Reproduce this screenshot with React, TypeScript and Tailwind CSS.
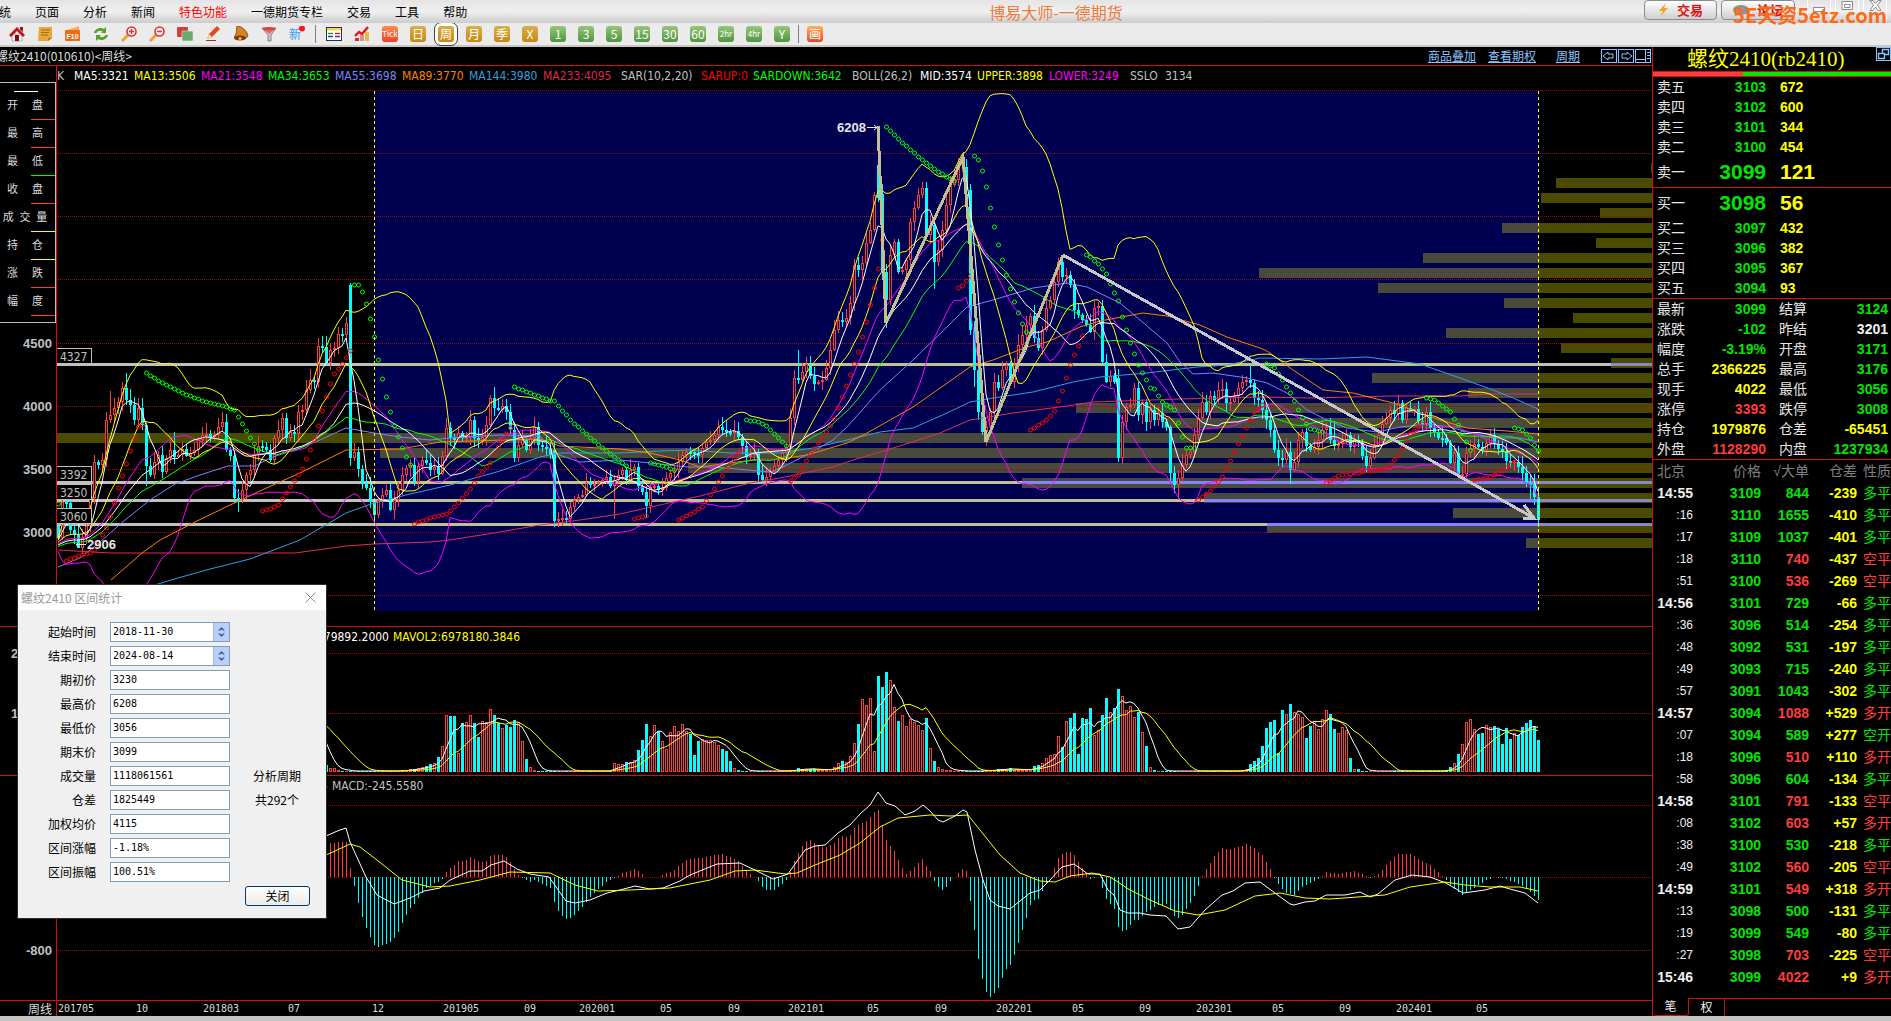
import type { ReactNode } from "react";

const FIRST_X = 58;
const STEP = 4;
const RANGE_START = 374;
const RANGE_END = 1538;

// weekly closes, already on the chart's vertical scale (63 units = 500 yuan)
const CLOSES = [
  538, 502, 503, 530, 535, 548, 538, 526, 498,
  462, 465, 460, 420, 415, 408, 402, 388, 400,
  405, 420, 408, 425, 466, 475, 462, 455, 472, 458,
  450, 457, 455, 449, 456, 453, 450, 440, 435, 434,
  437, 435, 427, 422, 450, 456, 498, 500, 490, 475,
  470, 455, 446, 447, 450, 460, 438, 430, 418, 438,
  432, 434, 412, 410, 390, 380, 382, 346, 347, 363,
  350, 348, 334, 335, 323, 458, 452, 469, 483, 488,
  502, 515, 500, 495, 490, 510, 500, 490, 475, 468,
  465, 482, 466, 460, 463, 470, 467, 474, 456, 428,
  438, 438, 433, 438, 437, 420, 438, 440, 437, 425,
  398, 408, 410, 406, 412, 430, 458, 445, 440, 450,
  438, 427, 445, 447, 449, 455, 521, 519, 518, 519,
  507, 500, 497, 495, 483, 485, 484, 482, 480, 477,
  486, 480, 475, 470, 480, 470, 467, 486, 492, 506,
  487, 486, 490, 488, 478, 473, 470, 462, 455, 452,
  452, 454, 455, 448, 442, 440, 435, 427, 430, 432,
  433, 431, 437, 446, 457, 455, 452, 475, 480, 477,
  472, 466, 460, 453, 447, 418, 378, 380, 372, 364,
  376, 384, 382, 380, 368, 350, 330, 320, 322, 318,
  303, 265, 270, 263, 243, 230, 195, 198, 272, 300,
  255, 242, 272, 270, 260, 222, 208, 195, 188, 235,
  225, 262, 250, 230, 205, 185, 180, 165, 158, 190,
  330, 370, 412, 432, 427, 412, 382, 388, 370, 365,
  382, 365, 345, 335, 325, 316, 338, 348, 330, 308,
  300, 282, 262, 277, 275, 285, 310, 315, 320, 325,
  332, 308, 306, 362, 382, 376, 382, 458, 422, 407,
  405, 388, 415, 402, 422, 410, 420, 413, 422, 427,
  473, 485, 478, 465, 455, 452, 435, 418, 402, 412,
  396, 400, 390, 389, 403, 402, 396, 388, 382, 380,
  383, 398, 400, 410, 420, 430, 450, 458, 460, 452,
  470, 462, 440, 432, 446, 450, 447, 440, 430, 427,
  440, 446, 444, 440, 435, 447, 440, 443, 456, 466,
  458, 446, 435, 424, 418, 410, 414, 403, 420, 408,
  410, 409, 421, 424, 412, 428, 432, 438, 438, 443,
  463, 453, 475, 474, 453, 449, 444, 447, 450, 443,
  435, 444, 449, 452, 461, 463, 462, 467, 473, 483,
  484, 497, 520,
];

const OPENS: Record<number, number> = { 350: 285, 878: 165, 882: 194, 966: 167, 1118: 378, 354: 458, 554: 450 };
const HIGHS: Record<number, number> = {
  126: 373, 110: 391, 878: 126, 966: 159, 1250: 364, 494: 387, 798: 350, 690: 447, 1286: 438, 322: 336, 174: 432, 1334: 421, 1494: 428,
};
const LOWS: Record<number, number> = {
  146: 486, 374: 523, 614: 519, 646: 518, 886: 328, 934: 289, 1290: 484, 1178: 500, 1530: 499, 78: 545, 238: 512, 986: 446, 974: 387,
};

type Point = [number, number];

const MA55: Point[] = [
  [58, 567], [80, 558], [100, 542], [125, 520], [150, 500], [175, 484], [200, 475], [228, 466], [255, 466], [270, 458],
  [300, 448], [320, 440], [346, 428], [374, 433], [400, 437], [430, 440], [450, 438], [500, 435], [540, 436], [553, 453],
  [580, 462], [620, 460], [650, 463], [687, 467], [713, 467], [737, 469], [770, 472], [783, 467], [810, 453], [833, 440],
  [847, 427], [880, 390], [913, 360], [947, 327], [967, 307], [993, 300], [1033, 288], [1067, 283], [1087, 287],
  [1120, 303], [1140, 320], [1167, 343], [1180, 362], [1193, 374], [1213, 373], [1247, 378], [1267, 383], [1287, 393],
  [1307, 410], [1327, 420], [1347, 428], [1377, 432], [1400, 427], [1427, 424], [1450, 427], [1467, 432], [1493, 438],
  [1520, 438], [1538, 442],
];
const MA89: Point[] = [
  [111, 580], [142, 553], [160, 540], [195, 522], [228, 506], [262, 490], [300, 473], [346, 450], [400, 449], [440, 442],
  [470, 441], [540, 439], [560, 446], [620, 449], [650, 453], [680, 460], [700, 467], [730, 463], [760, 459], [780, 459],
  [807, 455], [847, 443], [867, 433], [890, 420], [913, 407], [933, 393], [970, 367], [993, 360], [1027, 347],
  [1047, 342], [1080, 327], [1100, 321], [1143, 313], [1167, 316], [1200, 325], [1227, 337], [1260, 348], [1267, 351],
  [1293, 370], [1323, 390], [1353, 393], [1393, 403], [1413, 410], [1440, 420], [1467, 428], [1507, 431], [1538, 434],
];
const MA144: Point[] = [
  [155, 585], [171, 580], [210, 569], [250, 559], [300, 540], [346, 513], [374, 503], [410, 494], [450, 485], [500, 471],
  [540, 457], [560, 453], [620, 453], [660, 451], [690, 450], [730, 453], [760, 453], [780, 453], [813, 448], [847, 440],
  [880, 432], [913, 428], [947, 413], [970, 402], [993, 398], [1033, 392], [1073, 382], [1100, 377], [1147, 373],
  [1197, 367], [1227, 365], [1260, 358], [1320, 359], [1367, 357], [1420, 364], [1460, 378], [1493, 390], [1513, 398],
  [1538, 409],
];
const MA233: Point[] = [
  [58, 550], [110, 553], [180, 553], [295, 553], [346, 546], [374, 544], [430, 542], [450, 540], [500, 532], [540, 525],
  [580, 520], [620, 514], [660, 505], [700, 496], [750, 483], [780, 478], [833, 467], [853, 460], [887, 450], [940, 433],
  [970, 420], [1013, 413], [1067, 406], [1093, 402], [1180, 399], [1260, 397], [1310, 398], [1393, 396], [1460, 396],
  [1487, 394], [1538, 394],
];

const SAR_DOWN: Point[][] = [
  [[58, 504], [58, 504]],
  [[146, 373], [162, 383], [182, 393], [202, 401], [222, 406], [234, 410], [242, 424], [250, 438], [258, 450]],
  [[354, 285], [358, 285], [362, 292], [366, 304], [370, 319], [374, 337], [378, 360], [386, 397], [394, 426], [402, 448], [410, 465]],
  [[514, 387], [530, 393], [550, 401], [554, 401], [570, 420], [590, 438], [606, 451], [626, 466]],
  [[650, 463], [662, 466], [674, 470]],
  [[746, 420], [758, 422], [766, 426], [786, 446]],
  [[886, 127], [898, 139], [910, 150], [922, 160], [934, 169], [946, 177], [954, 181]],
  [[974, 156], [978, 160], [982, 171], [986, 187], [990, 208], [998, 245], [1006, 275], [1014, 302], [1022, 324], [1026, 332]],
  [[1086, 255], [1090, 257], [1098, 264], [1106, 274], [1110, 284], [1118, 301], [1122, 317], [1130, 343], [1138, 365], [1150, 388], [1154, 389], [1162, 402], [1174, 410], [1178, 423], [1182, 437], [1186, 448], [1194, 448]],
  [[1266, 364], [1274, 368], [1282, 380], [1290, 393], [1302, 418], [1310, 429], [1322, 432]],
  [[1426, 398], [1434, 400], [1442, 406], [1450, 412], [1458, 425], [1470, 450]],
  [[1514, 428], [1522, 430], [1530, 438], [1538, 451]],
];
const SAR_UP: Point[][] = [
  [[66, 561], [78, 556], [90, 553], [94, 550], [102, 535], [106, 528], [110, 517], [114, 503], [118, 488], [126, 464], [134, 438], [138, 427], [142, 425]],
  [[262, 511], [270, 509], [278, 505], [290, 487], [302, 469], [314, 440], [322, 411], [326, 397], [330, 384], [334, 374], [342, 364], [350, 351]],
  [[414, 524], [418, 522], [434, 517], [446, 514], [454, 507], [470, 489], [478, 476], [490, 463], [498, 447], [510, 428]],
  [[634, 519], [646, 516]],
  [[678, 520], [690, 514], [702, 507], [710, 495], [726, 469], [742, 449]],
  [[790, 481], [798, 475], [810, 454], [826, 432], [834, 419], [842, 397], [850, 375], [858, 352], [866, 322], [874, 288], [878, 269], [882, 240]],
  [[958, 288], [962, 286], [970, 276]],
  [[1030, 430], [1046, 420], [1054, 411], [1062, 391], [1070, 365], [1082, 336]],
  [[1198, 500], [1210, 491], [1222, 477], [1238, 444], [1254, 412], [1262, 405]],
  [[1326, 483], [1338, 476], [1350, 474], [1366, 471], [1382, 470], [1390, 465], [1398, 455], [1410, 434], [1422, 424]],
  [[1474, 480], [1490, 477], [1498, 473], [1506, 468], [1514, 462]],
];

// left edge of each volume-at-price bar, from the top down
const PROFILE = [
  1651, 1556, 1541, 1600, 1502, 1596, 1423, 1259, 1378, 1504, 1573, 1446, 1561, 1611, 1372, 1468, 1076, 1163, 57, 380,
  688, 1022, 1204, 1453, 1267, 1526,
];

const LEVELS = [
  { price: 4327, y: 363, overlap: 1611 },
  { price: 3392, y: 481, overlap: 1022 },
  { price: 3250, y: 499, overlap: 1204 },
  { price: 3060, y: 523, overlap: 1267 },
];

const VOLUME_BASE = 772;
const VOLUME_RUNS: [number, number[]][] = [
  [270, [735, 720, 715, 712, 718, 710, 716, 712, 715, 722, 720, 728, 740, 757, 765, 768, 768, 770]],
  [402, [770, 770, 769, 769, 768, 767, 766, 764, 763, 757, 746, 715, 716, 716, 753, 723, 722, 715, 723, 737, 721, 722, 709, 715, 723, 728, 725, 727, 720, 722, 741, 759, 767, 770]],
  [614, [763, 764, 764, 762, 762, 760, 750, 740, 724, 736, 725, 731, 741, 749, 732, 726, 731, 724, 731, 734, 755, 741, 739, 740, 740, 742, 745, 749, 751, 761, 768, 770]],
  [790, [770, 770, 768, 769, 769, 769, 769, 770, 770, 770, 769, 767, 763, 761, 762, 756, 743, 724, 699, 705, 698, 751, 676, 687, 672, 680, 707, 721, 715, 726, 719, 722, 725, 730, 718, 748, 761, 767, 769, 770, 770]],
  [986, [770, 770, 770, 769, 769, 769, 768, 770, 770, 770, 770, 769, 766, 765, 763, 758, 755, 754, 736, 747, 721, 718, 713, 754, 718, 719, 708, 735, 730, 715, 698, 712, 708, 689, 696, 710, 706, 717, 712, 732, 746, 767, 770]],
  [1242, [770, 769, 764, 761, 758, 746, 728, 722, 720, 753, 710, 714, 704, 712, 714, 717, 738, 726, 721, 729, 719, 710, 714, 729, 733, 727, 730, 758, 769, 769]],
  [1446, [770, 767, 763, 754, 744, 722, 719, 729, 734, 733, 725, 727, 726, 729, 744, 728, 739, 733, 735, 727, 723, 720, 727, 740]],
];

const HISTOGRAM: Point[] = [
  [262, 850], [326, 843], [346, 842], [350, 868], [354, 886], [358, 903], [362, 917], [366, 928], [370, 937], [374, 945], [378, 947],
  [382, 945], [390, 942], [394, 938], [398, 932], [402, 923], [406, 915], [410, 908], [414, 904], [418, 898], [426, 888],
  [434, 883], [438, 882], [442, 879], [446, 872], [450, 868], [454, 865], [458, 861], [466, 860], [470, 857], [474, 859],
  [482, 862], [486, 861], [490, 856], [494, 855], [502, 855], [506, 857], [510, 862], [518, 875], [522, 878], [530, 882],
  [534, 880], [542, 884], [550, 888], [554, 902], [558, 911], [562, 916], [566, 919], [570, 918], [574, 915], [582, 907],
  [590, 897], [598, 889], [606, 882], [614, 878], [622, 873], [630, 871], [634, 869], [638, 871], [646, 877], [658, 877],
  [666, 873], [674, 870], [678, 866], [686, 860], [694, 858], [702, 858], [710, 856], [722, 854], [730, 857], [738, 861],
  [746, 870], [754, 877], [758, 881], [762, 887], [766, 890], [774, 890], [782, 884], [786, 880], [790, 872], [794, 861],
  [798, 853], [802, 846], [806, 841], [810, 840], [818, 845], [822, 847], [826, 847], [834, 843], [838, 838], [842, 836],
  [846, 837], [850, 835], [854, 828], [858, 825], [866, 821], [874, 812], [878, 810], [882, 825], [886, 840], [894, 851],
  [902, 868], [906, 874], [914, 867], [922, 859], [926, 866], [930, 871], [934, 881], [938, 887], [942, 890], [946, 887],
  [950, 881], [958, 873], [962, 869], [966, 871], [970, 901], [974, 930], [978, 959], [982, 979], [986, 992], [990, 997],
  [994, 993], [998, 988], [1002, 978], [1006, 969], [1010, 965], [1014, 955], [1018, 943], [1022, 930], [1026, 918],
  [1030, 905], [1034, 900], [1038, 899], [1042, 891], [1046, 883], [1050, 877], [1054, 868], [1058, 858], [1062, 854],
  [1066, 852], [1070, 852], [1074, 855], [1078, 862], [1082, 868], [1086, 874], [1090, 879], [1098, 877], [1102, 888],
  [1106, 899], [1114, 909], [1118, 927], [1122, 931], [1126, 930], [1134, 920], [1138, 920], [1146, 912], [1158, 905],
  [1166, 904], [1174, 916], [1178, 918], [1182, 915], [1190, 903], [1194, 896], [1198, 886], [1202, 876], [1206, 869],
  [1214, 856], [1222, 848], [1230, 849], [1238, 847], [1246, 844], [1254, 848], [1262, 855], [1270, 869], [1274, 878],
  [1278, 884], [1286, 893], [1294, 895], [1302, 887], [1310, 883], [1318, 879], [1326, 872], [1338, 874], [1346, 872],
  [1354, 871], [1362, 874], [1370, 878], [1378, 874], [1386, 865], [1394, 857], [1398, 854], [1410, 854], [1422, 861],
  [1430, 865], [1438, 872], [1446, 880], [1454, 889], [1462, 895], [1470, 890], [1478, 885], [1486, 880], [1494, 877],
  [1506, 879], [1514, 882], [1522, 886], [1530, 892], [1538, 900],
];
const DIF: Point[] = [
  [300, 845], [326, 836], [335, 832], [340, 830], [346, 828], [350, 842], [366, 877], [377, 895], [394, 904], [410, 898], [424, 891],
  [440, 888], [450, 880], [470, 871], [482, 871], [491, 865], [504, 861], [517, 869], [530, 874], [549, 877], [566, 901],
  [575, 903], [590, 900], [607, 893], [620, 890], [635, 886], [650, 889], [663, 888], [680, 881], [690, 875], [717, 864],
  [740, 863], [757, 871], [773, 879], [788, 874], [805, 850], [815, 846], [825, 845], [838, 833], [850, 825], [860, 814],
  [870, 805], [878, 792], [886, 803], [895, 806], [905, 815], [915, 811], [923, 805], [930, 811], [938, 820], [943, 822],
  [955, 816], [963, 810], [967, 812], [975, 850], [983, 880], [990, 900], [998, 906], [1010, 909], [1020, 901],
  [1030, 893], [1040, 890], [1050, 880], [1062, 867], [1074, 864], [1088, 874], [1100, 874], [1108, 890], [1114, 895],
  [1120, 910], [1128, 913], [1140, 913], [1150, 915], [1166, 916], [1178, 929], [1190, 927], [1205, 910], [1222, 895],
  [1233, 891], [1245, 883], [1260, 882], [1275, 893], [1290, 904], [1294, 905], [1305, 902], [1315, 901], [1326, 895],
  [1345, 895], [1360, 892], [1370, 897], [1378, 894], [1395, 880], [1412, 875], [1430, 877], [1446, 883], [1463, 893],
  [1485, 890], [1500, 886], [1510, 889], [1525, 893], [1538, 903],
];
const DEA: Point[] = [
  [300, 865], [326, 855], [335, 851], [350, 844], [360, 847], [377, 860], [402, 880], [430, 887], [450, 886], [480, 880], [510, 872],
  [550, 873], [575, 885], [598, 891], [630, 890], [670, 888], [710, 880], [735, 871], [755, 870], [785, 874], [797, 873],
  [815, 865], [840, 855], [860, 843], [880, 827], [898, 818], [930, 815], [950, 816], [968, 815], [980, 830], [1000, 855],
  [1020, 873], [1040, 881], [1055, 882], [1070, 876], [1092, 873], [1110, 877], [1130, 890], [1150, 900], [1175, 911],
  [1198, 915], [1225, 910], [1255, 896], [1280, 893], [1305, 898], [1330, 899], [1385, 895], [1410, 887], [1445, 882],
  [1465, 885], [1490, 887], [1520, 887], [1538, 891],
];

const DATES: [number, string][] = [
  [58, "201705"], [136, "10"], [203, "201803"], [288, "07"], [372, "12"], [443, "201905"], [524, "09"], [579, "202001"],
  [660, "05"], [728, "09"], [788, "202101"], [867, "05"], [935, "09"], [996, "202201"], [1072, "05"], [1139, "09"],
  [1196, "202301"], [1272, "05"], [1339, "09"], [1396, "202401"], [1476, "05"],
];

const xAt = (i: number) => FIRST_X + i * STEP;
const noise = (i: number, seed: number) => {
  const v = Math.sin(i * 12.9898 + seed * 78.233) * 43758.5453;
  return v - Math.floor(v);
};
const toPoints = (pts: Point[]) => pts.map(([x, y]) => `${x},${y}`).join(" ");

function valueAt(points: Point[], x: number) {
  for (let i = 1; i < points.length; i++) {
    const [x1, y1] = points[i];
    if (x <= x1) {
      const [x0, y0] = points[i - 1];
      return x1 === x0 ? y1 : y0 + ((y1 - y0) * (x - x0)) / (x1 - x0);
    }
  }
  return points[points.length - 1][1];
}

function sample(points: Point[]): Point[] {
  const out: Point[] = [];
  for (let x = points[0][0]; x <= points[points.length - 1][0]; x += STEP) {
    out.push([x, Math.round(valueAt(points, x))]);
  }
  return out;
}

const HISTORY = Array.from({ length: 40 }, (_, i) => 556 - i * 0.4);
const SERIES = [...HISTORY, ...CLOSES];

function average(n: number): Point[] {
  return CLOSES.map((_, i) => {
    const part = SERIES.slice(i + HISTORY.length - n + 1, i + HISTORY.length + 1);
    return [xAt(i), part.reduce((a, b) => a + b, 0) / n];
  });
}

function band(n: number, k: number): Point[] {
  return average(n).map(([x, mean], i) => {
    const part = SERIES.slice(i + HISTORY.length - n + 1, i + HISTORY.length + 1);
    const variance = part.reduce((a, b) => a + (b - mean) ** 2, 0) / n;
    return [x, mean + k * Math.sqrt(variance)];
  });
}

const VOLUMES = CLOSES.map(() => 771);
VOLUME_RUNS.forEach(([x0, tops]) =>
  tops.forEach((top, k) => {
    VOLUMES[(x0 - FIRST_X) / STEP + k] = top;
  }),
);
const volumeAverage = (n: number): Point[] =>
  VOLUMES.map((_, i) => {
    const part = VOLUMES.slice(Math.max(0, i - n + 1), i + 1);
    return [xAt(i), part.reduce((a, b) => a + b, 0) / part.length];
  });

const openAt = (i: number) => OPENS[xAt(i)] ?? (i ? CLOSES[i - 1] : 526);
const isUp = (i: number) => CLOSES[i] < openAt(i);

function Line({ points, color }: { points: Point[]; color: string }) {
  return <polyline points={toPoints(points)} fill="none" stroke={color} strokeWidth={1} />;
}

function GridLine({ y }: { y: number }) {
  return <line x1={58} x2={1652} y1={y + 0.5} y2={y + 0.5} stroke="#b00000" strokeDasharray="1 1" />;
}

function Candles() {
  return (
    <g shapeRendering="crispEdges">
      {CLOSES.map((close, i) => {
        const x = xAt(i);
        const open = openAt(i);
        const up = isUp(i);
        const top = Math.min(open, close);
        const height = Math.max(2, Math.abs(open - close));
        const high = Math.min(top, HIGHS[x] ?? top - 2 - Math.round(noise(i, 1) * 9));
        const low = Math.max(top + height, LOWS[x] ?? top + height + 1 + Math.round(noise(i, 2) * 8));
        const color = up ? "#ff3c3c" : "#00ffff";
        return (
          <g key={x}>
            <rect x={x} y={high} width={1} height={low - high} fill={color} />
            <rect x={x - 1} y={top} width={3} height={height} fill={color} />
            {up && height > 2 && (
              <rect x={x} y={top + 1} width={1} height={height - 2} fill={x >= RANGE_START ? "#000050" : "#000000"} />
            )}
          </g>
        );
      })}
    </g>
  );
}

function PriceChart() {
  return (
    <svg className="block h-[560px] w-full" role="img" aria-label="螺纹2410 周线">
      <g transform="translate(0 -66)">
        <rect x={RANGE_START} y={91} width={RANGE_END - RANGE_START} height={520} fill="#000050" />
        {PROFILE.map((left, i) => (
          <g key={i}>
            <rect x={left} y={163 + i * 15} width={1652 - left} height={10} fill="#4a4a00" />
            {left < RANGE_END && (
              <rect
                x={Math.max(left, RANGE_START)}
                y={163 + i * 15}
                width={RANGE_END - Math.max(left, RANGE_START)}
                height={10}
                fill="#4a4a3c"
              />
            )}
          </g>
        ))}
        {[90, 153, 216, 279, 343, 406, 469, 532, 595].map((y) => (
          <GridLine key={y} y={y} />
        ))}
        {LEVELS.map(({ price, y, overlap }) => (
          <g key={price} shapeRendering="crispEdges">
            <rect x={56} y={y} width={1596} height={3} fill="#c0c0c0" />
            <rect x={RANGE_START} y={y} width={RANGE_END - RANGE_START} height={3} fill="#c0c090" />
            <rect x={overlap} y={y} width={1652 - overlap} height={3} fill="#8888c4" />
            {overlap < RANGE_END && <rect x={overlap} y={y} width={RANGE_END - overlap} height={3} fill="#8484ff" />}
          </g>
        ))}
        <Candles />
        <Line points={MA233} color="#e03050" />
        <Line points={MA144} color="#30a0dc" />
        <Line points={MA89} color="#ff8000" />
        <Line points={MA55} color="#8080ff" />
        <Line points={average(34)} color="#00ff00" />
        <Line points={average(21)} color="#ff00ff" />
        <Line points={average(26)} color="#ffffff" />
        <Line points={band(26, -2)} color="#ffff00" />
        <Line points={band(26, 2)} color="#ff00ff" />
        <Line points={average(13)} color="#ffff00" />
        <Line points={average(5)} color="#ffffff" />
        {SAR_DOWN.flatMap(sample).map(([x, y]) => (
          <circle key={x} cx={x + 0.5} cy={y} r={2} fill="none" stroke="#00ff00" />
        ))}
        {SAR_UP.flatMap(sample).map(([x, y]) => (
          <circle key={x} cx={x + 0.5} cy={y} r={2} fill="none" stroke="#ff0000" />
        ))}
        <g fill="none" strokeWidth={3} shapeRendering="crispEdges">
          <polyline points="878,126 886,323 963,157 986,442 1063,255" stroke="#c0c090" />
          <path d="M1063 255L1534 518M1524 505L1534 518L1523 518" stroke="#c8c8c8" />
        </g>
        {[RANGE_START, RANGE_END].map((x) => (
          <line key={x} x1={x + 0.5} x2={x + 0.5} y1={91} y2={611} stroke="#ffff00" strokeDasharray="3 3" />
        ))}
        {LEVELS.map(({ price, y }) => (
          <g key={price}>
            <rect x={56.5} y={y - 14.5} width={35} height={15} fill="#000000" stroke="#c0c0c0" />
            <text x={60} y={y - 2} fill="#c0c0c0" className="font-['DejaVu_Sans_Condensed','Noto_Sans',sans-serif] text-[12px]">
              {price}
            </text>
          </g>
        ))}
        <g className="font-['Liberation_Sans',sans-serif] text-[13px] font-bold" fill="#c0c0c0">
          {[4500, 4000, 3500, 3000].map((price, i) => (
            <text key={price} x={52} y={348 + i * 63} textAnchor="end">
              {price}
            </text>
          ))}
          <text x={837} y={132} fill="#e6e6e6">6208</text>
          <text x={87} y={549} fill="#e6e6e6">2906</text>
        </g>
        <path d="M867 127.500H877M874 125L877 127.500L874 130M86 544.500H76M79 542L76 544.500L79 547" fill="none" stroke="#e6e6e6" />
        <line x1={56.5} x2={56.5} y1={66} y2={626} stroke="#c81414" />
      </g>
    </svg>
  );
}

function VolumeChart() {
  return (
    <svg className="block h-[148px] w-full" role="img" aria-label="成交量">
      <g transform="translate(0 -627)">
        <GridLine y={653} />
        <GridLine y={713} />
        <g shapeRendering="crispEdges">
          {VOLUMES.map((top, i) => {
            const x = xAt(i) - 1;
            const up = isUp(i);
            return (
              <g key={x}>
                <rect x={x} y={top} width={3} height={VOLUME_BASE - top} fill={up ? "#ff3c3c" : "#00ffff"} />
                {up && top < 770 && <rect x={x + 1} y={top + 1} width={1} height={VOLUME_BASE - top - 2} fill="#000000" />}
              </g>
            );
          })}
        </g>
        <Line points={volumeAverage(5)} color="#ffffff" />
        <Line points={volumeAverage(13)} color="#ffff00" />
        <g className="font-['Liberation_Sans',sans-serif] text-[13px] font-bold" fill="#c0c0c0">
          <text x={11} y={658}>200000</text>
          <text x={11} y={718}>100000</text>
        </g>
        <line x1={56.5} x2={56.5} y1={627} y2={775} stroke="#c81414" />
      </g>
    </svg>
  );
}

function MacdChart() {
  const bars = sample(HISTOGRAM);
  return (
    <svg className="block h-[224px] w-full" role="img" aria-label="MACD">
      <g transform="translate(0 -776)">
        <GridLine y={805} />
        <GridLine y={877} />
        <GridLine y={950} />
        <g shapeRendering="crispEdges">
          {bars.map(([x, y]) => (
            <rect
              key={x}
              x={x}
              y={Math.min(y, 877)}
              width={1}
              height={Math.abs(y - 877)}
              fill={y < 877 ? "#ff3c3c" : "#00ffff"}
            />
          ))}
        </g>
        <Line points={DIF} color="#ffffff" />
        <Line points={DEA} color="#ffff00" />
        <text x={52} y={955} textAnchor="end" fill="#c0c0c0" className="font-['Liberation_Sans',sans-serif] text-[13px] font-bold">
          -800
        </text>
        <line x1={56.5} x2={56.5} y1={776} y2={1000} stroke="#c81414" />
      </g>
    </svg>
  );
}

const MENU = ["系统", "页面", "分析", "新闻", "特色功能", "一德期货专栏", "交易", "工具", "帮助"];

function MenuBar() {
  return (
    <header className="relative flex h-[23px] items-center overflow-hidden bg-linear-to-b from-[#e4e4e4] via-[#f0f0f0] to-[#cccccc]">
      <nav className="-ml-[13px] flex w-[53%] shrink-0 gap-6 text-[12px] text-black">
        {MENU.map((item) => (
          <button key={item} type="button" className={item === "特色功能" ? "text-[#ff0000]" : ""}>
            {item}
          </button>
        ))}
      </nav>
      <h1 className="text-[16px] leading-5 whitespace-nowrap text-[#ee7a3c]">博易大师-一德期货</h1>
      <div className="flex flex-1 items-start justify-end gap-1 self-start text-[13px] font-bold text-[#dc1414]">
        <button type="button" className="flex h-5 w-[73px] items-center justify-center gap-2 rounded-[4px] border border-[#8c8c8c] bg-linear-to-b from-white to-[#cfcfcf]">
          <svg width="11" height="14" viewBox="0 0 11 14">
            <path d="M8 0L1 8H5L2 14L10 5H6Z" fill="#f5a01e" />
          </svg>
          <span>交易</span>
        </button>
        <button type="button" className="flex h-5 w-[74px] items-center justify-center gap-2 rounded-[4px] border border-[#8c8c8c] bg-linear-to-b from-white to-[#cfcfcf]">
          <svg width="16" height="12" viewBox="0 0 16 12">
            <ellipse cx="8" cy="6" rx="8" ry="5" fill="#909090" />
          </svg>
          <span>论坛</span>
        </button>
        <div className="ml-2 flex h-5 items-start">
          <WindowButton label="最小化">
            <rect x="5.500" y="7.500" width="11" height="4" />
          </WindowButton>
          <WindowButton label="最大化">
            <path d="M6 1.500H16.500V9.500H6ZM8.500 4.500H14V7.500H8.500Z" />
          </WindowButton>
          <WindowButton label="关闭窗口">
            <path d="M6 0.500H9L11.500 3.500L14 0.500H17L13.500 5L17 10.500H14L11.500 7L9 10.500H6L9.500 5Z" />
          </WindowButton>
        </div>
      </div>
    </header>
  );
}

function WindowButton({ label, children }: { label: string; children: ReactNode }) {
  return (
    <button type="button" aria-label={label} className="mr-1 h-5 w-6 border-x border-white">
      <svg width="22" height="20" viewBox="0 0 22 20" fill="#ffffff" stroke="#8c8c8c">
        {children}
      </svg>
    </button>
  );
}

const TOOL_ICONS: { label: string; art: ReactNode }[] = [
  {
    label: "首页",
    art: (
      <>
        <path d="M3 8H13V15H3Z" fill="#f2f2f2" stroke="#888" strokeWidth=".6" />
        <path d="M0 9L8 1L16 9L14 11L8 5L2 11Z" fill="#c01818" />
        <path d="M11 1H14V6L11 3.500Z" fill="#a01414" />
        <rect x="6" y="9" width="4" height="6" fill="#7a1010" />
      </>
    ),
  },
  {
    label: "便笺",
    art: (
      <>
        <path d="M2 1H15V12L11 15H1Z" fill="#e8a83c" />
        <path d="M15 12H11V15Z" fill="#b87818" />
        <path d="M4 4H13M4 6.500H12M4 9H11" stroke="#a86c14" />
      </>
    ),
  },
  {
    label: "F10",
    art: (
      <>
        <path d="M2 4L14 0L15 14L2 15Z" fill="#f4b060" />
        <rect x="0" y="4" width="15" height="11" rx="1" fill="#ee6a14" />
        <text x="1.500" y="12.500" fill="#fff" className="font-['Liberation_Sans',sans-serif] text-[7px] font-bold">F10</text>
      </>
    ),
  },
  {
    label: "刷新",
    art: (
      <path
        d="M1 7C2 2 8 1 11 3L13 1V7H8L9.500 5.500C7 4 4.500 5 3.500 7ZM15 9C14 14 8 15 5 13L3 15V9H8L6.500 10.500C9 12 11.500 11 12.500 9Z"
        fill="#58a028"
      />
    ),
  },
  {
    label: "放大",
    art: (
      <>
        <path d="M1 15L7 9" stroke="#f0a030" strokeWidth="3" />
        <circle cx="10.500" cy="5.500" r="4.500" fill="#fff0f0" stroke="#e03030" strokeWidth="1.600" />
        <path d="M8 5.500H13M10.500 3V8" stroke="#e03030" strokeWidth="1.400" />
      </>
    ),
  },
  {
    label: "缩小",
    art: (
      <>
        <path d="M1 15L7 9" stroke="#f0a030" strokeWidth="3" />
        <circle cx="10.500" cy="5.500" r="4.500" fill="#fff0f0" stroke="#e03030" strokeWidth="1.600" />
        <path d="M8 5.500H13" stroke="#e03030" strokeWidth="1.400" />
      </>
    ),
  },
  {
    label: "叠加",
    art: (
      <>
        <rect x="0" y="1" width="11" height="10" rx="1" fill="#d43c3c" />
        <rect x="5" y="5" width="11" height="10" rx="1" fill="#6ca86c" stroke="#dcecdc" strokeWidth=".6" />
      </>
    ),
  },
  {
    label: "画笔",
    art: (
      <>
        <path d="M1 14.500H11" stroke="#a03020" />
        <path d="M2 13L4 8L12 0L15 3L7 11Z" fill="#e04a20" />
        <path d="M2 13L4 8L7 11Z" fill="#f8d8a0" />
      </>
    ),
  },
  {
    label: "预警",
    art: (
      <>
        <path d="M4 0C8 0 14 4 15 10L13 12C9 14 4 13 1 11C4 9 3 4 4 0Z" fill="#d48420" stroke="#7a4410" strokeWidth=".8" />
        <ellipse cx="7" cy="12" rx="6" ry="2.500" fill="#7a3c10" />
        <circle cx="7" cy="12.500" r="1.500" fill="#f0c040" />
      </>
    ),
  },
  {
    label: "筛选",
    art: (
      <>
        <path d="M1 2H15L10 9V15H7V9Z" fill="#c8c8c8" stroke="#707070" strokeWidth=".8" />
        <ellipse cx="8" cy="3" rx="6.500" ry="2" fill="#e04040" />
        <path d="M4 4H12L8.500 8Z" fill="#e86060" />
      </>
    ),
  },
  {
    label: "新功能",
    art: (
      <>
        <text x="0" y="13" fill="#3c96f0" className="font-['Noto_Sans_CJK_SC',sans-serif] text-[12px]">新</text>
        <circle cx="13" cy="2.500" r="3" fill="#ff1414" />
      </>
    ),
  },
];

const CHART_ICONS: { label: string; art: ReactNode }[] = [
  {
    label: "报价",
    art: (
      <>
        <rect x=".5" y="1.500" width="15" height="13" fill="#fff" stroke="#303030" />
        <rect x="1" y="2" width="14" height="2.500" fill="#f0dc50" />
        <path d="M2 7.500H7" stroke="#20a020" strokeWidth="1.400" />
        <path d="M9 7.500H14" stroke="#d02020" strokeWidth="1.400" />
        <path d="M2 10.500H7M9 10.500H14" stroke="#2040d0" strokeWidth="1.400" />
      </>
    ),
  },
  {
    label: "走势",
    art: (
      <>
        <rect x="1" y="12" width="4" height="3" fill="#c83030" />
        <rect x="6" y="9" width="4" height="6" fill="#d89090" />
        <rect x="11" y="6" width="4" height="9" fill="#e8b848" />
        <path d="M1 10L5 6L8 8L14 1" stroke="#e01414" strokeWidth="2.400" fill="none" />
      </>
    ),
  },
];

const PERIODS = [
  { label: "Tick", tone: "tick" },
  { label: "日", tone: "gold" },
  { label: "周", tone: "gold" },
  { label: "月", tone: "gold" },
  { label: "季", tone: "gold" },
  { label: "X", tone: "gold" },
  { label: "1", tone: "green" },
  { label: "3", tone: "green" },
  { label: "5", tone: "green" },
  { label: "15", tone: "green" },
  { label: "30", tone: "green" },
  { label: "60", tone: "green" },
  { label: "2hr", tone: "green" },
  { label: "4hr", tone: "green" },
  { label: "Y", tone: "green" },
];

const TONES: Record<string, string> = {
  tick: "bg-linear-to-b from-[#ff8c50] to-[#f03c28]",
  gold: "bg-linear-to-b from-[#d8b048] to-[#c88808]",
  green: "bg-linear-to-b from-[#94c878] to-[#4f9440]",
};

function Toolbar() {
  return (
    <div className="flex h-6 items-center gap-3 border-b-2 border-[#cbc7c3] bg-[#ebebeb] pl-[9px]">
      {TOOL_ICONS.map(({ label, art }) => (
        <button key={label} type="button" aria-label={label} className="size-4 shrink-0">
          <svg width="16" height="16" viewBox="0 0 16 16" fill="none">{art}</svg>
        </button>
      ))}
      <span className="-mx-[2px] h-[18px] w-px bg-[#808080]" />
      {CHART_ICONS.map(({ label, art }) => (
        <button key={label} type="button" aria-label={label} className="size-4 shrink-0">
          <svg width="16" height="16" viewBox="0 0 16 16" fill="none">{art}</svg>
        </button>
      ))}
      {PERIODS.map(({ label, tone }) => (
        <button
          key={label}
          type="button"
          className={`flex size-4 shrink-0 items-center justify-center rounded-[3px] text-white ${TONES[tone]} ${
            label.length > 2 ? "text-[8px]" : "text-[12px]"
          } ${label === "周" ? "shadow-[0_0_0_3px_white] outline outline-offset-[3px] outline-[#404040]" : ""} leading-4`}
        >
          {label}
        </button>
      ))}
      <span className="-mx-1 h-[18px] w-px bg-[#808080]" />
      <button type="button" className="flex size-4 items-center justify-center rounded-[3px] bg-linear-to-b from-[#ffb050] to-[#f03c28] text-[12px] leading-4 text-white">
        画
      </button>
    </div>
  );
}

function ChartTitle() {
  return (
    <div className="flex h-[19px] items-center overflow-hidden border-b border-[#c81414] pr-px text-[12px]">
      <h2 className="-ml-1 flex-1 text-[#dcdcdc]">螺纹2410(010610)&lt;周线&gt;</h2>
      <nav className="flex items-center text-[#8cc4ff] underline">
        <a href="#overlay" className="mr-3">商品叠加</a>
        <a href="#options" className="mr-5">查看期权</a>
        <a href="#period" className="mr-[21px]">周期</a>
      </nav>
      <div className="flex gap-px">
        <FrameButton label="后退"><path d="M2 7L7 3V5H12V9H7V11Z" /></FrameButton>
        <FrameButton label="前进"><path d="M14 7L9 3V5H4V9H9V11Z" /></FrameButton>
        <FrameButton label="布局"><path d="M1 10.500H11M10.500 0V14M12 3.500H15M12 6.500H15M12 9.500H15" /></FrameButton>
      </div>
    </div>
  );
}

function FrameButton({ label, children }: { label: string; children: ReactNode }) {
  return (
    <button type="button" aria-label={label} className="h-[14px] w-4 border border-[#8cc4ff]">
      <svg width="14" height="12" viewBox="1 1 14 12" fill="none" stroke="#8cc4ff">{children}</svg>
    </button>
  );
}

const LEGEND = [
  { text: "K", style: "w-[17px] text-[#c0c0c0]" },
  { text: "MA5:3321", style: "w-[60px] text-white" },
  { text: "MA13:3506", style: "w-[67px] text-[#ffff00]" },
  { text: "MA21:3548", style: "w-[67px] text-[#ff00ff]" },
  { text: "MA34:3653", style: "w-[67px] text-[#00ff00]" },
  { text: "MA55:3698", style: "w-[67px] text-[#8080ff]" },
  { text: "MA89:3770", style: "w-[67px] text-[#ff8000]" },
  { text: "MA144:3980", style: "w-[74px] text-[#30a0dc]" },
  { text: "MA233:4095", style: "w-[78px] text-[#dc2850]" },
  { text: "SAR(10,2,20)", style: "w-[80px] text-[#c0c0c0]" },
  { text: "SARUP:0", style: "w-[52px] text-[#ff0000]" },
  { text: "SARDOWN:3642", style: "w-[99px] text-[#00ff00]" },
  { text: "BOLL(26,2)", style: "w-[68px] text-[#c0c0c0]" },
  { text: "MID:3574", style: "w-[57px] text-white" },
  { text: "UPPER:3898", style: "w-[72px] text-[#ffff00]" },
  { text: "LOWER:3249", style: "w-[81px] text-[#ff00ff]" },
  { text: "SSLO", style: "w-[35px] text-[#c0c0c0]" },
  { text: "3134", style: "text-[#c0c0c0]" },
];

const CURSOR_FIELDS = [
  { label: "开盘", line: "bg-[#ff3c3c]" },
  { label: "最高", line: "bg-[#ff3c3c]" },
  { label: "最低", line: "bg-[#00ff00]" },
  { label: "收盘", line: "bg-[#ff3c3c]" },
  { label: "成交量", line: "bg-[#ffff00]" },
  { label: "持仓", line: "bg-[#ffff00]" },
  { label: "涨跌", line: "bg-[#ff3c3c]" },
  { label: "幅度", line: "bg-[#ff3c3c]" },
];

function CursorWindow() {
  return (
    <div className="absolute top-4 left-0 w-14 border-y border-r border-[#c0c0c0] bg-black pb-[6px] text-[11px] text-[#dcdcdc]">
      <div className="mt-2 ml-[14px] h-px w-6 bg-white" />
      {CURSOR_FIELDS.map(({ label, line }) => (
        <div key={label} className="flex h-7 flex-col justify-between">
          <div className="flex justify-around pt-1 pr-[5px] leading-4">
            {label.split("").map((ch) => (
              <span key={ch}>{ch}</span>
            ))}
          </div>
          <div className={`h-px w-6 self-end ${line}`} />
        </div>
      ))}
    </div>
  );
}

const STATS = [
  ["start", "起始时间", "2018-11-30"],
  ["end", "结束时间", "2024-08-14"],
  ["first", "期初价", "3230"],
  ["high", "最高价", "6208"],
  ["low", "最低价", "3056"],
  ["last", "期末价", "3099"],
  ["volume", "成交量", "1118061561"],
  ["oi", "仓差", "1825449"],
  ["avg", "加权均价", "4115"],
  ["change", "区间涨幅", "-1.18%"],
  ["swing", "区间振幅", "100.51%"],
];

function RangeDialog() {
  return (
    <section
      role="dialog"
      aria-label="区间统计"
      className="absolute top-[584px] left-[17px] w-[310px] border border-[#2d2d2d] bg-[#f0f0f0] text-[12px] text-black"
    >
      <div className="flex h-[25px] items-center justify-between bg-white pr-[10px] pl-[3px] text-[#999999]">
        <h3>螺纹2410 区间统计</h3>
        <button type="button" aria-label="关闭" className="size-[11px]">
          <svg width="11" height="11" viewBox="0 0 11 11" stroke="#888888">
            <path d="M0.500 0.500L10.500 10.500M10.500 0.500L0.500 10.500" />
          </svg>
        </button>
      </div>
      <div className="flex pt-3">
        <div className="flex w-[212px] flex-col gap-1">
          {STATS.map(([id, label, value], i) => (
            <div key={id} className="flex h-5 items-center">
              <label htmlFor={`stat-${id}`} className="w-[78px] text-right">
                {label}
              </label>
              <div className="ml-[14px] flex h-5 w-[120px] border border-[#7f9db9] bg-white">
                <input
                  id={`stat-${id}`}
                  defaultValue={value}
                  className="w-full min-w-0 bg-white px-[2px] pb-[2px] font-['DejaVu_Sans_Mono',monospace] text-[10px] outline-none"
                />
                {i < 2 && (
                  <button type="button" aria-label="调整日期" className="w-4 shrink-0 border-l border-[#9db8dc] bg-[#b9d0fb]">
                    <svg width="15" height="18" viewBox="0 0 15 18" fill="#4d6185">
                      <path d="M4 7.500L7.500 4L11 7.500H9L7.500 6.500L6 7.500ZM4 10.500L7.500 14L11 10.500H9L7.500 11.500L6 10.500Z" />
                    </svg>
                  </button>
                )}
              </div>
            </div>
          ))}
        </div>
        <div className="flex flex-1 flex-col items-center gap-1 pt-36 pr-[2px] leading-5">
          <p>分析周期</p>
          <p>共292个</p>
        </div>
      </div>
      <div className="flex justify-end pt-1 pr-4 pb-3">
        <button type="button" className="h-5 w-[65px] rounded-[3px] border border-[#003c74] bg-linear-to-b from-white to-[#ecebe6] leading-4">
          关闭
        </button>
      </div>
    </section>
  );
}

const TEXT_COLORS: Record<string, string> = {
  g: "text-[#00e600]",
  r: "text-[#ff3c3c]",
  y: "text-[#ffff00]",
  w: "text-[#f0f0f0]",
};

const ASKS = [["卖五", 3103, 672], ["卖四", 3102, 600], ["卖三", 3101, 344], ["卖二", 3100, 454], ["卖一", 3099, 121]];
const BIDS = [["买一", 3098, 56], ["买二", 3097, 432], ["买三", 3096, 382], ["买四", 3095, 367], ["买五", 3094, 93]];

function Depth({ rows }: { rows: (string | number)[][] }) {
  return (
    <table className="w-full table-fixed border-b border-[#c81414]">
      <tbody>
        {rows.map(([label, price, size]) => {
          const best = label === "卖一" || label === "买一";
          return (
            <tr key={label} className={best ? "h-[30px]" : "h-5"}>
              <th className="w-12 p-0 pl-1 text-left text-[14px] leading-5 font-normal text-[#e6e6e6]">{label}</th>
              <td className={`w-[65px] p-0 text-right font-bold text-[#00e600] ${best ? "text-[21px]" : "text-[14px]"} leading-5`}>{price}</td>
              <td className={`p-0 pl-[14px] font-bold text-[#ffff00] ${best ? "text-[21px]" : "text-[14px]"} leading-5`}>{size}</td>
            </tr>
          );
        })}
      </tbody>
    </table>
  );
}

const SUMMARY = [
  ["最新", "3099", "g", "结算", "3124", "g"],
  ["涨跌", "-102", "g", "昨结", "3201", "w"],
  ["幅度", "-3.19%", "g", "开盘", "3171", "g"],
  ["总手", "2366225", "y", "最高", "3176", "g"],
  ["现手", "4022", "y", "最低", "3056", "g"],
  ["涨停", "3393", "r", "跌停", "3008", "g"],
  ["持仓", "1979876", "y", "仓差", "-65451", "y"],
  ["外盘", "1128290", "r", "内盘", "1237934", "g"],
];

const TICKS = [
  ["14:55", "3109", "844", "g", "-239", "多平", "g"],
  [":16", "3110", "1655", "g", "-410", "多平", "g"],
  [":17", "3109", "1037", "g", "-401", "多平", "g"],
  [":18", "3110", "740", "r", "-437", "空平", "r"],
  [":51", "3100", "536", "r", "-269", "空平", "r"],
  ["14:56", "3101", "729", "g", "-66", "多平", "g"],
  [":36", "3096", "514", "g", "-254", "多平", "g"],
  [":48", "3092", "531", "g", "-197", "多平", "g"],
  [":49", "3093", "715", "g", "-240", "多平", "g"],
  [":57", "3091", "1043", "g", "-302", "多平", "g"],
  ["14:57", "3094", "1088", "r", "+529", "多开", "r"],
  [":07", "3094", "589", "g", "+277", "空开", "g"],
  [":18", "3096", "510", "r", "+110", "多开", "r"],
  [":58", "3096", "604", "g", "-134", "多平", "g"],
  ["14:58", "3101", "791", "r", "-133", "空平", "r"],
  [":08", "3102", "603", "r", "+57", "多开", "r"],
  [":38", "3100", "530", "g", "-218", "多平", "g"],
  [":49", "3102", "560", "r", "-205", "空平", "r"],
  ["14:59", "3101", "549", "r", "+318", "多开", "r"],
  [":13", "3098", "500", "g", "-131", "多平", "g"],
  [":19", "3099", "549", "g", "-80", "多平", "g"],
  [":27", "3098", "703", "r", "-225", "空平", "r"],
  ["15:46", "3099", "4022", "r", "+9", "多开", "r"],
];

function QuotePanel() {
  return (
    <aside className="flex w-[239px] shrink-0 flex-col overflow-hidden border-l border-[#c81414] font-['Liberation_Sans','Noto_Sans_CJK_SC',sans-serif]">
      <div className="flex h-6 items-center">
        <h2 className="flex-1 pl-[34px] font-['Liberation_Serif','Noto_Sans_CJK_SC',serif] text-[21px] leading-6 whitespace-nowrap text-[#ffff00]">
          螺纹2410(rb2410)
        </h2>
        <button type="button" aria-label="还原" className="h-[14px] w-[15px] self-start border border-[#8cc4ff]">
          <svg width="13" height="12" viewBox="0 0 13 12" fill="none" stroke="#8cc4ff">
            <path d="M5.500 5V1.500H11.500V6.500H8M1.500 5.500H7.500V10.500H1.500Z" strokeWidth="1.400" />
          </svg>
        </button>
      </div>
      <div className="flex h-[6px] shrink-0 border-y border-[#c81414]">
        <div className="w-[90px] bg-[#ff3c3c]" />
        <div className="flex-1 bg-[#00e600]" />
      </div>
      <Depth rows={ASKS} />
      <Depth rows={BIDS} />
      <table className="w-full table-fixed border-b border-[#c81414] text-[14px] leading-5">
        <tbody>
          {SUMMARY.map(([l1, v1, c1, l2, v2, c2]) => (
            <tr key={l1} className="h-5">
              <th className="w-10 p-0 pl-1 text-left font-normal text-[#e6e6e6]">{l1}</th>
              <td className={`w-[73px] p-0 text-right font-bold ${TEXT_COLORS[c1]}`}>{v1}</td>
              <th className="w-12 p-0 pl-[13px] text-left font-normal whitespace-nowrap text-[#e6e6e6]">{l2}</th>
              <td className={`p-0 pr-[3px] text-right font-bold ${TEXT_COLORS[c2]}`}>{v2}</td>
            </tr>
          ))}
        </tbody>
      </table>
      <table className="w-full table-fixed text-[14px] leading-5">
        <thead>
          <tr className="h-[22px] whitespace-nowrap text-[#808080]">
            <th className="w-10 p-0 pl-1 text-left font-normal">北京</th>
            <th className="w-[68px] p-0 text-right font-normal">价格</th>
            <th className="w-12 p-0 text-right font-normal">√大单</th>
            <th className="w-12 p-0 text-right font-normal">仓差</th>
            <th className="p-0 pl-[6px] text-left font-normal">性质</th>
          </tr>
        </thead>
        <tbody>
          {TICKS.map(([time, price, lots, c1, diff, kind, c2], i) => (
            <tr key={i} className="h-[22px] whitespace-nowrap">
              <td className={`p-0 text-right text-[#f0f0f0] ${time.length > 3 ? "font-bold" : "text-[12px]"}`}>{time}</td>
              <td className="p-0 text-right font-bold text-[#00e600]">{price}</td>
              <td className={`p-0 text-right font-bold ${TEXT_COLORS[c1]}`}>{lots}</td>
              <td className="p-0 text-right font-bold text-[#ffff00]">{diff}</td>
              <td className={`p-0 pl-[6px] ${TEXT_COLORS[c2]}`}>{kind}</td>
            </tr>
          ))}
        </tbody>
      </table>
      <div className="mt-auto flex h-[18px] text-[12px] leading-4 text-[#f0f0f0]">
        <button type="button" className="w-9 rounded-b-[3px] border-r border-b border-[#c81414]">笔</button>
        <button type="button" className="w-9 border-t border-r border-[#c81414]">权</button>
        <div className="flex-1 border-t border-[#c81414]" />
      </div>
    </aside>
  );
}

export default function App() {
  return (
    <div className="relative flex min-h-screen flex-col overflow-hidden bg-black font-['Noto_Sans_CJK_SC',sans-serif]">
      <MenuBar />
      <Toolbar />
      <div className="flex flex-1">
        <main className="min-w-0 flex-1">
          <ChartTitle />
          <div className="relative border-b border-[#c81414]">
            <div className="absolute top-0 left-[57px] flex h-5 items-center font-['DejaVu_Sans_Condensed','Noto_Sans',sans-serif] text-[12px] whitespace-nowrap">
              {LEGEND.map(({ text, style }) => (
                <span key={text} className={style}>{text}</span>
              ))}
            </div>
            <CursorWindow />
            <PriceChart />
          </div>
          <div className="relative border-b border-[#c81414]">
            <p className="absolute top-0 left-[57px] flex h-5 items-center gap-1 font-['DejaVu_Sans_Condensed','Noto_Sans',sans-serif] text-[12px] whitespace-nowrap">
              <span className="w-[332px] text-right text-white">MAVOL1:7279892.2000</span>
              <span className="text-[#ffff00]">MAVOL2:6978180.3846</span>
            </p>
            <VolumeChart />
          </div>
          <div className="relative border-b border-[#c81414]">
            <p className="absolute top-0 left-[57px] flex h-5 items-center gap-1 font-['DejaVu_Sans_Condensed','Noto_Sans',sans-serif] text-[12px] whitespace-nowrap">
              <span className="w-[271px] text-right text-[#ffff00]">DEA:-62.8195</span>
              <span className="text-[#c0c0c0]">MACD:-245.5580</span>
            </p>
            <MacdChart />
          </div>
          <div className="flex text-[#dcdcdc]">
            <span className="w-14 pr-1 text-right text-[12px] leading-[15px]">周线</span>
            <svg className="block h-[15px] flex-1 border-l border-[#c81414]">
              {DATES.map(([x, label]) => (
                <text key={x} x={x - 57} y={11} fill="#dcdcdc" className="font-['DejaVu_Sans_Mono',monospace] text-[10px]">
                  {label}
                </text>
              ))}
            </svg>
          </div>
        </main>
        <QuotePanel />
      </div>
      <footer className="h-[5px] bg-[#c6c4c2]" />
      <RangeDialog />
      <p className="absolute top-0 right-1 text-[20px] leading-[30px] font-bold text-[#ff6a14]">5E天资5etz.com</p>
    </div>
  );
}
